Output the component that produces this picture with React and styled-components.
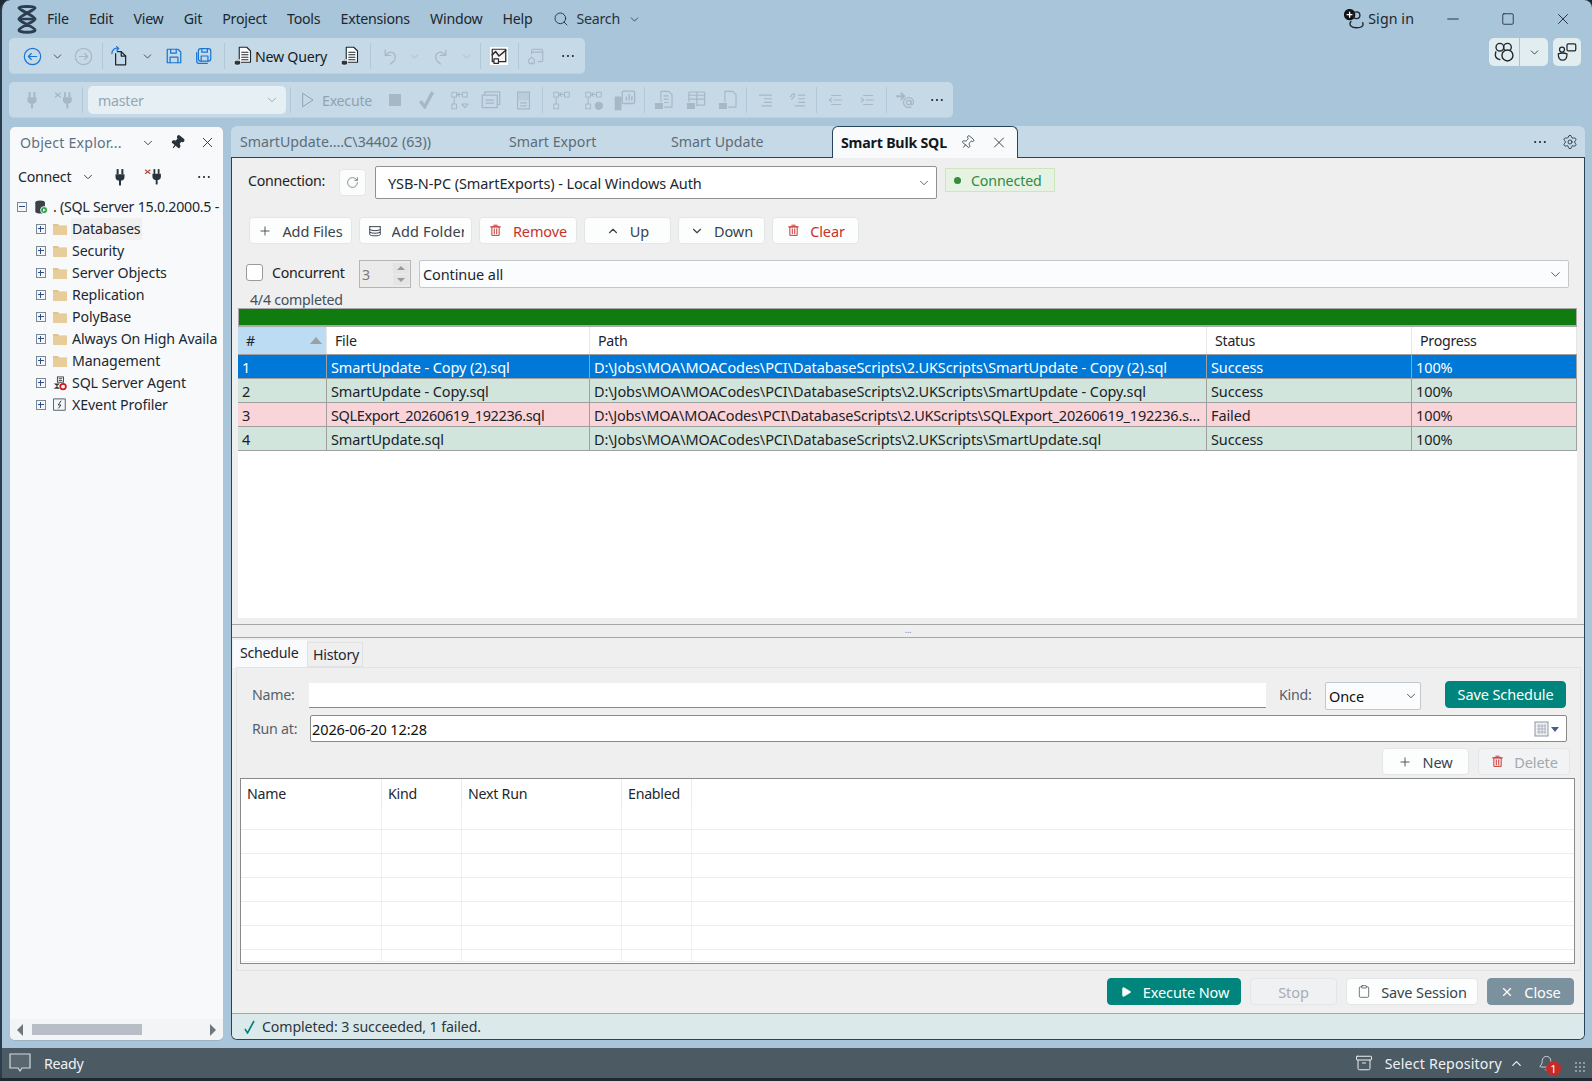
import React from 'react';
import styled, { createGlobalStyle } from 'styled-components';
import { ChevronDown, ChevronUp, Search, X, Pin, Settings, Plus, Square, Minus, Play, Clipboard, Bell, Archive, RotateCw } from 'lucide-react';

const Global = createGlobalStyle`
  html, body { margin: 0; padding: 0; background: #1d2a33; overflow: hidden; }
  * { box-sizing: border-box; }
  #root { width: 1592px; height: 1081px; }
`;

const Frame = styled.div`
  width: 1592px; height: 1078px; background: #a8c5da; border-left: 2px solid #2a3d4e;
  border-top-left-radius: 10px; border-top-right-radius: 8px; overflow: hidden;
  display: flex; flex-direction: column;
  font-family: "Noto Sans", "Open Sans", sans-serif; font-size: 14.2px; letter-spacing: -0.25px; color: #1c2730;
`;
const Wide = `font-size: 14.5px; letter-spacing: -0.1px;`;

const MenuBar = styled.div`height: 38px; display: flex; align-items: center; padding: 0 2px 0 11px; flex-shrink: 0;`;
const Logo = styled.div`width: 27px; height: 30px; display: flex; align-items: center; justify-content: center; margin-right: 7px;`;
const MenuItems = styled.div`display: flex; gap: 20.2px; align-items: center;`;
const MenuItem = styled.span`line-height: 20px; white-space: nowrap;`;
const SearchBox = styled.div`display: flex; align-items: center; gap: 8px; margin-left: 20px; color: #28343d;`;
const Grow = styled.div`flex: 1;`;
const SignIn = styled.div`display: flex; align-items: center; gap: 4px; margin-right: 11px; letter-spacing: 0.1px;`;
const WinBtn = styled.div`width: 55px; display: flex; justify-content: center; align-items: center; color: #1c2730;`;

const ToolRow = styled.div`display: flex; height: 36px; margin: 0 0 8px 7px; align-items: stretch; flex-shrink: 0;`;
const Toolbar = styled.div`
  width: ${p => p.$w}px; background: #c6d9e7; border-radius: 5px; display: flex; align-items: center;
  padding-left: ${p => p.$pad}px; box-shadow: inset 0 -1px 0 #bcd1e0;
`;
const Slot = styled.div`
  width: ${p => p.$w || 32}px; flex-shrink: 0; display: flex; align-items: center; justify-content: center;
  color: ${p => p.$c || '#a6b8c5'};
`;
const Sep = styled.div`
  width: ${p => p.$w || 6}px; flex-shrink: 0; height: 26px; display: flex; justify-content: center;
  &::after { content: ''; width: 1px; background: #b3c8d7; }
`;
const NewQueryBtn = styled.div`width: 105px; flex-shrink: 0; padding-left: 5px; display: flex; align-items: center; gap: 2px; color: #151d24; white-space: nowrap;`;
const DbCombo = styled.div`
  width: 198px; height: 28px; margin-left: 4px; flex-shrink: 0; background: #e6eff3; border-radius: 5px; display: flex; align-items: center;
  justify-content: space-between; padding: 0 7px 0 10px; color: #94a6b2;
`;
const ExecBtn = styled.div`width: 85px; flex-shrink: 0; padding-left: 6px; display: flex; align-items: center; gap: 6px; color: #8fa3b1;`;
const Corner = styled.div`margin-left: auto; margin-right: 11px; display: flex; gap: 5px;`;
const CornerBtn = styled.div`
  height: 28px; width: ${p => p.$w}px; background: #e2edf0; border-radius: 5px; display: flex; align-items: center; overflow: hidden;
`;
const CornerCell = styled.div`
  width: ${p => p.$w}px; height: 100%; display: flex; align-items: center; justify-content: center;
  & + & { border-left: 1px solid #aebfca; }
`;

const Main = styled.div`flex: 1; display: flex; padding: 0 7px 0 8px; min-height: 0; height: 914px;`;

const Explorer = styled.div`
  width: 213px; margin-top: 1px; flex-shrink: 0; background: #f8f9fb; border-radius: 5px; display: flex; flex-direction: column;
  box-shadow: 0 1px 0 #9db2c1;
`;
const ExTitle = styled.div`height: 31px; display: flex; align-items: center; padding-left: 10px; color: #5d7183; white-space: nowrap; letter-spacing: 0.2px;`;
const ExIcon = styled.div`width: ${p => p.$w}px; margin-left: ${p => p.$ml || 0}px; display: flex; justify-content: center; align-items: center; color: #28333c; flex-shrink: 0;`;
const TiltPin = styled(Pin)`transform: rotate(40deg);`;
const ConnectRow = styled.div`height: 34px; padding: 3px 0 0 8px; display: flex; align-items: center;`;
const Tree = styled.div`flex: 1; padding-top: 4px; overflow: hidden; letter-spacing: -0.13px;`;
const TreeRow = styled.div`height: 22px; display: flex; align-items: center; padding-left: ${p => p.$in}px; white-space: nowrap;`;
const Expander = styled.div`
  width: 10px; height: 10px; border: 1px solid #7c8794; background: #f4f5f7; flex-shrink: 0; position: relative; margin-right: 7px;
  &::before { content: ''; position: absolute; left: 1px; right: 1px; top: 3px; height: 1px; background: #2d4f8a; }
  &::after { content: ''; position: absolute; top: 1px; bottom: 1px; left: 3px; width: 1px; background: #2d4f8a; display: ${p => p.$open ? 'none' : 'block'}; }
`;
const TreeIcon = styled.div`width: 14px; height: 14px; display: flex; align-items: center; flex-shrink: 0; margin-right: 4px;`;
const TreeLabel = styled.span`
  padding: 0 1px; line-height: 22px; background: ${p => p.$sel ? '#f0f0f0' : 'transparent'}; letter-spacing: ${p => p.$tight ? '-0.25px' : 'inherit'};
`;
const ExScroll = styled.div`height: 21px; background: #f3f4f5; border-radius: 0 0 5px 5px; display: flex; align-items: center; padding: 0 7px 0 7px;`;
const ExThumb = styled.div`width: 110px; height: 11px; background: #b9bdc5; margin-left: 9px;`;
const Arrow = styled.div`
  width: 0; height: 0; border-top: 6px solid transparent; border-bottom: 6px solid transparent;
  ${p => p.$r ? 'border-left: 6px solid #6d7780; margin-left: auto;' : 'border-right: 6px solid #6d7780;'}
`;

const Doc = styled.div`width: 1354px; margin-left: 8px; display: flex; flex-direction: column; flex-shrink: 0;`;
const TabStrip = styled.div`
  height: 32px; background: #c6d9e7; border-radius: 6px 6px 0 0; border-bottom: 1px solid #26445c; display: flex; flex-shrink: 0; align-items: stretch; color: #5c6d79; letter-spacing: 0;
`;
const DocTab = styled.div`width: ${p => p.$w}px; padding-left: ${p => p.$pl}px; display: flex; align-items: center; white-space: nowrap; flex-shrink: 0;`;
const ActiveTab = styled.div`
  width: 186px; height: 32px; background: #f9fafb; border: 1px solid #26445c; border-bottom: none; border-radius: 6px 6px 0 0; color: #101820;
  font-weight: 700; display: flex; align-items: center; padding-left: 8px; white-space: nowrap; flex-shrink: 0; letter-spacing: -0.2px;
`;
const TabTools = styled.div`margin-left: auto; display: flex; align-items: center; gap: 15px; padding-right: 7px; color: #28333c;`;

const Content = styled.div`
  flex: 1; background: #efefef; border: 1px solid #26445c; border-top: none; border-radius: 0 0 6px 6px; display: flex; flex-direction: column; min-height: 0; overflow: hidden;
`;
const ConnRow = styled.div`display: flex; align-items: flex-start; padding: 8px 0 0 16px; height: 41px; flex-shrink: 0;`;
const ConnLabel = styled.div`width: 91px; line-height: 30px; color: #222;`;
const RefreshBtn = styled.div`width: 27px; height: 27px; margin-top: 3px; background: #fbfcfc; border: 1px solid #e4e6e7; border-radius: 4px; display: flex; align-items: center; justify-content: center; color: #555;`;
const ConnCombo = styled.div`
  ${Wide}
  width: 562px; height: 33px; margin-left: 9px; padding: 1px 5px 0 12px; background: #fff; border: 1px solid #8e9295; border-radius: 2px; display: flex; align-items: center;
  justify-content: space-between;
`;
const Badge = styled.div`
  width: 110px; height: 24px; margin: 2px 0 0 8px; background: #e6f2e2; border: 1px solid #cde6c0; display: flex; align-items: center; padding-left: 8px; color: #2e8b47; gap: 10px; letter-spacing: -0.12px;
`;
const Dot = styled.div`width: 7px; height: 7px; border-radius: 50%; background: #2f8f3e;`;
const BtnRow = styled.div`display: flex; gap: 7px; padding: 18px 0 0 17px; height: 45px; flex-shrink: 0;`;
const Btn = styled.div`
  ${Wide}
  width: ${p => p.$w}px; height: 27px; flex-shrink: 0; border-radius: 4px; display: flex; align-items: center; justify-content: center; gap: ${p => p.$gap || 10}px;
  background: ${p => p.$bg || '#fcfdfd'}; border: 1px solid ${p => p.$line || '#e3e5e6'}; color: ${p => p.$c || '#3a444c'}; white-space: nowrap; overflow: hidden;
`;
const ClipText = styled.span`display: block; max-width: ${p => p.$w}px; overflow: hidden; letter-spacing: 0.15px;`;
const BtnIcon = styled.span`display: flex; width: 14px; justify-content: center; color: ${p => p.$c || 'inherit'}; flex-shrink: 0;`;
const ConcRow = styled.div`display: flex; align-items: center; padding: 16px 0 0 14px; height: 44px; flex-shrink: 0;`;
const Check = styled.div`width: 17px; height: 17px; background: #fff; border: 1px solid #9a9a9a; border-radius: 3px; margin-right: 9px; margin-bottom: 4px;`;
const ConcLabel = styled.div`width: 87px; color: #222; margin-bottom: 4px;`;
const Spin = styled.div`width: 52px; height: 28px; background: #ebebeb; border: 1px solid #b5b5b5; display: flex; align-items: center; padding-left: 2px; color: #7a7a7a; justify-content: space-between;`;
const SpinBtns = styled.div`width: 18px; height: 100%; padding: 2px 1px; display: flex; flex-direction: column; gap: 1px;`;
const SpinB = styled.div`
  flex: 1; background: #e2e4e6; display: flex; align-items: center; justify-content: center;
  &::after { content: ''; border-left: 4px solid transparent; border-right: 4px solid transparent; ${p => p.$up ? 'border-bottom: 4px solid #9a9a9a;' : 'border-top: 4px solid #9a9a9a;'} }
`;
const PolicyCombo = styled.div`
  ${Wide}
  width: 1150px; height: 28px; margin-left: 8px; background: #fbfcfd; border: 1px solid #c4c8cb; border-radius: 2px; display: flex; align-items: center;
  justify-content: space-between; padding: 0 5px 0 3px;
`;
const CountLabel = styled.div`height: 20px; padding-left: 18px; line-height: 24px; color: #45505a; flex-shrink: 0;`;
const Progress = styled.div`height: 19px; margin: 0 7px 0 6px; background: #107c10; border: 1px solid #a9a9a9; border-bottom-width: 2px; flex-shrink: 0;`;
const Grid = styled.div`height: 291px; margin: 0 7px 0 6px; background: #fff; flex-shrink: 0;`;
const cols = '89px 263px 617px 205px 1fr';
const HeadRow = styled.div`display: grid; grid-template-columns: ${cols}; height: 28px; border-bottom: 1px solid #a0a0a0;`;
const HeadCell = styled.div`
  padding-left: 8px; display: flex; align-items: center; justify-content: space-between; border-right: 1px solid #e6e6e6; color: #1d242b;
  background: ${p => p.$sort ? '#bbdcf2' : 'transparent'};
`;
const SortTri = styled.div`width: 0; height: 0; border-left: 6px solid transparent; border-right: 6px solid transparent; border-bottom: 7px solid #9aa0a5; margin-right: 4px;`;
const DataRow = styled.div`
  ${Wide}
  display: grid; grid-template-columns: ${cols}; height: 24px; background: ${p => p.$bg}; color: ${p => p.$c || '#1c2228'}; border-bottom: 1px solid #a0a0a0;
`;
const DataCell = styled.div`
  padding-left: 4px; line-height: 25px; white-space: nowrap; overflow: hidden; border-right: 1px solid #a0a0a0;
  letter-spacing: ${p => p.$ls || 'inherit'};
`;
const Splitter = styled.div`
  height: 14px; margin-top: 6px; border-top: 1px solid #a6a6a6; border-bottom: 1px solid #a6a6a6; display: flex; justify-content: center; color: #8a8a8a;
  font-size: 9px; line-height: 10px; flex-shrink: 0;
`;
const InnerTabs = styled.div`height: 29px; display: flex; align-items: flex-end; padding-left: 1px; flex-shrink: 0;`;
const InTab = styled.div`
  width: ${p => p.$w}px; height: ${p => p.$on ? 28 : 25}px; padding-left: ${p => p.$on ? 7 : 5}px; background: ${p => p.$on ? '#f8fafb' : '#efefef'};
  border: ${p => p.$on ? 'none' : '1px solid #e2e2e2'}; line-height: ${p => p.$on ? 26 : 24}px; margin-bottom: ${p => p.$on ? -1 : 0}px; flex-shrink: 0;
`;
const Panel = styled.div`
  height: 304px; margin: 0 3px 0 4px; border: 1px solid #e3e3e3; padding: 12px 5px 0 15px; display: flex; flex-direction: column; flex-shrink: 0;
`;
const FormRow = styled.div`display: flex; align-items: center; height: ${p => p.$h}px; margin-top: ${p => p.$mt || 0}px; flex-shrink: 0;`;
const FormLabel = styled.div`width: 57px; color: #55616b; flex-shrink: 0;`;
const NameInput = styled.div`width: 957px; height: 25px; margin-top: 2px; background: #fff; border-bottom: 1px solid #8a8a8a;`;
const KindLabel = styled.div`width: 46px; margin-left: 13px; color: #55616b;`;
const KindCombo = styled.div`
  ${Wide}
  width: 96px; height: 28px; margin-top: 4px; background: #fbfcfd; border: 1px solid #c4c8cb; border-radius: 2px; display: flex; align-items: center; justify-content: space-between; padding: 0 2px 0 3px; margin-right: 24px; color: #111;
`;
const RunInput = styled.div`
  ${Wide}
  width: 1257px; height: 27px; margin-left: 1px; background: #fff; border: 1px solid #8a8a8a; border-radius: 2px; display: flex; align-items: center; justify-content: space-between; padding: 0 6px 0 1px; color: #111;
`;
const RightRow = styled.div`display: flex; justify-content: flex-end; gap: 9px; margin-top: 6px; margin-right: 5px; flex-shrink: 0;`;
const SchedTable = styled.div`height: 186px; width: 1335px; margin: 3px 0 0 -12px; background: #fff; border: 1px solid #8a8a8a; flex-shrink: 0; position: relative; overflow: hidden;`;
const scols = '141px 80px 160px 70px 1fr';
const SchedHead = styled.div`display: grid; grid-template-columns: ${scols}; height: 28px;`;
const SchedHeadCell = styled.div`padding-left: 6px; line-height: 29px; border-right: 1px solid #ececec; &:last-child { border: none; }`;
const SchedRow = styled.div`display: grid; grid-template-columns: ${scols}; height: ${p => p.$h || 24}px; border-bottom: 1px solid #ededed;`;
const SchedCell = styled.div`border-right: 1px solid #f0f0f0; &:last-child { border: none; }`;
const Actions = styled.div`display: flex; justify-content: flex-end; gap: 9px; padding: 7px 10px 0 0; height: 42px; flex-shrink: 0;`;
const Result = styled.div`
  flex: 1; background: #dce9ea; border-top: 1px solid #a6a6a6; display: flex; align-items: center; padding-left: 12px; gap: 6px; color: #2b3640; letter-spacing: -0.12px;
`;
const StatusBar = styled.div`
  height: 30px; margin-top: 8px; background: #4c5a64; display: flex; align-items: center; padding: 0 6px 0 7px; color: #eef2f4; flex-shrink: 0;
`;
const ReadyText = styled.span`margin-left: 13px;`;
const RepoText = styled.span`margin: 0 7px 0 12px; letter-spacing: 0.17px;`;
const BellWrap = styled.div`position: relative; display: flex; margin-left: 14px; width: 20px; color: #dfe5e8;`;
const NotifBadge = styled.div`
  position: absolute; left: 8px; top: 6px; width: 15px; height: 15px; border-radius: 50%; background: #c42b2b; color: #fff; font-size: 11px; line-height: 15px; text-align: center; letter-spacing: 0;
`;
const Grip = styled.div`margin-left: 16px; width: 12px; height: 12px; margin-top: 8px; background-image: radial-gradient(#8f9aa2 1px, transparent 1px); background-size: 4px 4px;`;

const G = ({ s = 16, children, fill = 'none', sw = 1.1 }) => (
  <svg viewBox="0 0 16 16" width={s} height={s} fill={fill} stroke="currentColor" strokeWidth={sw} strokeLinecap="round" strokeLinejoin="round">{children}</svg>
);
const Chev = ({ s = 13, sw = 1.5 }) => <ChevronDown size={s} strokeWidth={sw} />;

const LogoIcon = () => (
  <svg viewBox="0 0 24 30" width="26" height="30" fill="none" stroke="#2c3e4f" strokeWidth="3" strokeLinecap="round">
    <path d="M4 4c0-2 16-2 16 0s-16 8-16 11 16 8 16 11-16 3-16 0 16-8 16-11S4 6 4 4z" />
    <path d="M4 15h16" strokeWidth="2.4" />
  </svg>
);
const CircleArrow = ({ back }) => (
  <G s={19} sw={1}><circle cx="8" cy="8" r="6.9" />{back ? <path d="M11.5 8h-7M7 5.5 4.5 8 7 10.5" /> : <path d="M4.5 8h7M9 5.5 11.5 8 9 10.5" />}</G>
);
const NewProject = () => (
  <G s={20} sw={1}><path d="M6 4.5h3l3.5 3.5v7H4.5V6" /><path d="M9 4.5V8h3.5" /><path d="M1.5 6c.2-3 2.4-4.7 5-4.2M5.3 0.5 7 1.9 5.5 3.6" stroke="#1976d2" /></G>
);
const Floppy = () => (
  <G s={18} sw={1.1}><path d="M2 2h9.5L14 4.5V14H2z" /><path d="M5 2v3.5h5V2M4.5 14V9h7v5" /></G>
);
const FloppyAll = () => (
  <G s={18} sw={1.1}><rect x="3" y="1.5" width="11" height="11" rx="2" /><path d="M6 1.5v3h5v-3M5.5 12.5V8h6v4.5" /><path d="M1.5 5v7.5c0 1.2 1 2 2 2H11" /></G>
);
const QueryDoc = () => (
  <G s={20} sw={0.9}>
    <path d="M5 1h6l3 3v9H5z" fill="#fff" stroke="#1c2730" /><path d="M7 5h5M7 7h5M7 9h5M7 11h5" stroke="#1c2730" />
    <ellipse cx="3.5" cy="12" rx="2.6" ry="1.4" fill="#28333c" stroke="#fff" strokeWidth=".6" /><path d="M1 12v2.2c0 1.5 5 1.5 5 0V12z" fill="#28333c" stroke="#fff" strokeWidth=".6" />
  </G>
);
const Undo = () => <G s={17} sw={1.2}><path d="M3 2v5h5M3 7c2-2.5 4-3.5 6-3 4 1 4.5 6 2 8.500L8 15" /></G>;
const Redo = () => <G s={17} sw={1.2}><path d="M13 2v5H8M13 7c-2-2.500-4-3.500-6-3-4 1-4.500 6-2 8.500L8 15" /></G>;
const Activity = () => (
  <G s={18} sw={1.1}>
    <rect x="0.500" y="0.500" width="15" height="15" fill="#fff" stroke="#fff" />
    <rect x="2" y="2" width="12" height="11" fill="#f4f4f4" stroke="#2b2b2b" />
    <path d="M2 7l3-3 3 4 6-5" stroke="#2b2b2b" strokeWidth="1.300" /><rect x="3.500" y="10.500" width="4" height="4" fill="#fff" stroke="#2b2b2b" />
  </G>
);
const Home = () => <G s={18} sw={1}><path d="M4 6V3.500c0-1 .7-1.500 1.500-1.500h7c1 0 1.500.7 1.500 1.500v8c0 1-.6 1.500-1.500 1.500H10M4 4.500h10" /><path d="M1.500 14v-2.500L4 9l2.500 2.500V14a1 1 0 0 1-2 0h-.5a1 1 0 0 1-2 0z" /></G>;
const Plug = ({ s = 18 }) => (
  <svg viewBox="0 0 16 16" width={s} height={s} fill="currentColor"><rect x="5" y="1" width="1.800" height="4.500" /><rect x="9.200" y="1" width="1.800" height="4.500" /><path d="M4 5.500h8V8c0 2-1.200 3-2.500 3.200h-3C5.200 11 4 10 4 8z" /><rect x="7.100" y="10.500" width="1.800" height="5" /></svg>
);
const PlugX = ({ s = 18, xc = '#b5533a' }) => (
  <svg viewBox="0 0 18 16" width={s + 2} height={s} fill="currentColor"><rect x="9" y="1" width="1.700" height="4.500" /><rect x="13" y="1" width="1.700" height="4.500" /><path d="M8 5.500h8V8c0 2-1.200 3-2.500 3.200h-3C9.200 11 8 10 8 8z" /><rect x="11.100" y="10.500" width="1.800" height="5" /><path d="M1 1.500l5 4M6 1.500l-5 4" stroke={xc} strokeWidth="1.200" fill="none" /></svg>
);
const Check2 = () => <svg viewBox="0 0 16 16" width="18" height="18" fill="none" stroke="currentColor" strokeWidth="3"><path d="M2 9l4 5 7-13" /></svg>;
const Flow = ({ v }) => (
  <G s={19} sw={0.9}>
    <rect x="1.500" y="1" width="4" height="4" strokeDasharray="1 .6" /><rect x="10.500" y="1" width="4" height="4" strokeDasharray="1 .6" /><rect x="1.500" y="11" width="4" height="4" strokeDasharray="1 .6" />
    <path d="M10 3H6M8 1.500 6 3l2 1.500M3.500 10.500V5.500" />
    {v === 'd' && <path d="M10 11l2.500 3 2.500-3z" />}
    {v === 'c' && <circle cx="12.500" cy="12.500" r="3" fill="currentColor" />}
  </G>
);
const Stack = () => <G s={20} sw={1}><rect x="3" y="1.500" width="12" height="10" strokeDasharray="1.200 .5" /><rect x="1" y="4" width="12" height="10" fill="#c6d9e7" /><path d="M4 8h6M4 10.500h6" /></G>;
const Panes = () => <G s={19} sw={1}><rect x="3" y="1" width="10" height="14" /><rect x="3.500" y="1.500" width="9" height="6" fill="currentColor" opacity=".35" /><path d="M5.500 10h5M5.500 12.500h5" /></G>;
const Bars = () => <G s={22} sw={1}><rect x="6" y="1.500" width="9" height="9" rx="1" /><path d="M9 8V6M11 8V4M13 8V5.500" /><rect x="1" y="6" width="4" height="9" fill="currentColor" /></G>;
const BinDoc = ({ k }) => (
  <G s={21} sw={.9}>
    {k === 't' ? <><rect x="3" y="1.500" width="12" height="10" /><path d="M3 4h12M3 7h12M9 1.500v10" /></> : <path d="M6 1h6l2.500 2.500V13H6z" strokeDasharray="1.500 .4" />}
    {k === 'l' && <path d="M8.500 4.500h3M8.500 7h3M8.500 9.500h3" />}
    <rect x="1" y="9.500" width="7" height="5.500" fill="currentColor" stroke="#c6d9e7" />
  </G>
);
const IndList = ({ undo }) => <G s={19} sw={1}>{undo ? <path d="M2 5c2-4 5-3 3 0L3 7M9 3.500h5M9 6.500h5M9 9.500h5M6 12.500h8" /> : <path d="M3 3.500h10M7 6.500h6M7 9.500h6M5 12.500h8" />}</G>;
const Outdent = ({ flip }) => <G s={18} sw={1}>{flip ? <path d="M5 4h8M3 6.500l2 1.500-2 1.500M7 8h7M5 12h8" /> : <path d="M5 4h8M5 6.500 3 8l2 1.500M7 8h7M5 12h8" />}</G>;
const AtArrow = () => <G s={20} sw={1}><path d="M1.500 5h6M5 2.500 7.500 5 5 7.500" strokeWidth="1.500" /><circle cx="11" cy="10" r="1.800" /><path d="M12.800 8.500v2.500c0 1.300 2 .7 2-1 0-2.500-1.800-4-4-4s-4 1.800-4 4 1.800 4 4 4c.8 0 1.500-.2 2-.5" /></G>;
const Dots = ({ c = '#1c2730' }) => <svg viewBox="0 0 16 4" width="14" height="4" fill={c}><circle cx="2.500" cy="2" r="1.200" /><circle cx="8" cy="2" r="1.200" /><circle cx="13.500" cy="2" r="1.200" /></svg>;
const Person = () => <G s={20} sw={1.1}><circle cx="4.500" cy="4.500" r="4" fill="#111" stroke="#111" /><path d="M4.500 2.500v4M2.500 4.500h4" stroke="#fff" /><circle cx="10" cy="5" r="2.700" /><path d="M5.500 10c-2 3 .5 5 4.500 5s6-1.500 5-4" /></G>;
const Team = () => <G s={22} sw={1}><circle cx="5" cy="4.500" r="2.800" /><circle cx="10.500" cy="4.500" r="2.800" /><path d="M2 8c-.8 3 0 5 3 5.500" /><circle cx="10.500" cy="10.500" r="4" fill="#e2edf0" /></G>;
const Chat = () => <G s={20} sw={1}><rect x="8" y="1.500" width="7" height="5.500" rx="1" /><circle cx="4" cy="6" r="2" /><path d="M1 9.500c2-.8 5-.8 7 0 0 3-.5 5-3.500 5S1 12.500 1 9.500z" /></G>;
const Folder = () => <svg viewBox="0 0 14 14" width="14" height="14" fill="#e0c48a"><path d="M0 2h5l1 1.500h8V13H0z" /><rect x="0" y="4" width="14" height="9" fill="#e6cd9a" /></svg>;
const Server = () => (
  <svg viewBox="0 0 16 16" width="16" height="16"><ellipse cx="7" cy="3" rx="5.500" ry="2.500" fill="#3c4247" /><path d="M1.500 3v10c0 3.300 11 3.300 11 0V3z" fill="#3c4247" /><circle cx="11.500" cy="11.500" r="4" fill="#2e9e4f" stroke="#fff" /><path d="M10.300 9.700v3.600l3-1.800z" fill="#fff" /></svg>
);
const Agent = () => (
  <svg viewBox="0 0 16 16" width="15" height="15"><rect x="5" y="0.500" width="7" height="6" fill="#fff" stroke="#333" /><path d="M6.500 2.500h4M6.500 4.500h4" stroke="#333" /><path d="M1 8h7l-7 6h7z" fill="#333" /><circle cx="11.500" cy="11.500" r="3.200" fill="#fff" stroke="#d01818" strokeWidth="2" /></svg>
);
const XEvent = () => <G s={14} sw={1}><rect x="1" y="1" width="13" height="13" fill="#f4f5f7" stroke="#454d55" /><path d="M9 3.500 6 8h3l-2.500 3.500" /></G>;
const Trash = ({ s = 15 }) => <G s={s} sw={1.2}><path d="M3.500 4v10h9V4zM2 3.500h12M6 1.500h4M6.500 6v6M9.500 6v6" /></G>;
const FolderAdd = () => <G s={14} sw={1.1}><path d="M2 3h12M2 3v9c0 2 12 2 12 0V3M2 6.500c3 1.500 9 1.500 12 0M2 9.500c3 1.500 9 1.500 12 0" /></G>;
const Tick = () => <svg viewBox="0 0 12 14" width="12" height="14" fill="none" stroke="#00857c" strokeWidth="1.600"><path d="M1 9l2.500 4L10 1" /></svg>;
const Calendar = () => (
  <svg viewBox="0 0 26 16" width="26" height="16"><rect x="1" y="1" width="13" height="14" fill="#eef0f4" stroke="#8d94a2" /><path d="M3 5h9M3 8h9M3 11h9M5 3v10M8 3v10M11 3v10" stroke="#aeb3be" /><path d="M17 6h8l-4 5z" fill="#4f5b8c" /></svg>
);

const tree = ['Security', 'Server Objects', 'Replication', 'PolyBase', 'Always On High Availa', 'Management'];
const rows = [
  ['1', 'SmartUpdate - Copy (2).sql', 'D:\\Jobs\\MOA\\MOACodes\\PCI\\DatabaseScripts\\2.UKScripts\\SmartUpdate - Copy (2).sql', 'Success', '#0078d7', '#fff'],
  ['2', 'SmartUpdate - Copy.sql', 'D:\\Jobs\\MOA\\MOACodes\\PCI\\DatabaseScripts\\2.UKScripts\\SmartUpdate - Copy.sql', 'Success', '#d1e5dc'],
  ['3', 'SQLExport_20260619_192236.sql', 'D:\\Jobs\\MOA\\MOACodes\\PCI\\DatabaseScripts\\2.UKScripts\\SQLExport_20260619_192236.s...', 'Failed', '#f9d5da', undefined, '-0.37px', '-0.2px'],
  ['4', 'SmartUpdate.sql', 'D:\\Jobs\\MOA\\MOACodes\\PCI\\DatabaseScripts\\2.UKScripts\\SmartUpdate.sql', 'Success', '#d1e5dc'],
];
const red = '#c8322d';

export default function App() {
  return (
    <>
      <Global />
      <Frame>
        <MenuBar>
          <Logo><LogoIcon /></Logo>
          <MenuItems>
            {['File', 'Edit', 'View', 'Git', 'Project', 'Tools', 'Extensions', 'Window', 'Help'].map(m => <MenuItem key={m}>{m}</MenuItem>)}
          </MenuItems>
          <SearchBox><Search size={16} strokeWidth={1.4} /><MenuItem>Search</MenuItem><Chev /></SearchBox>
          <Grow />
          <SignIn><Person /><MenuItem>Sign in</MenuItem></SignIn>
          <WinBtn><Minus size={18} strokeWidth={1.2} /></WinBtn>
          <WinBtn><Square size={14} strokeWidth={1.4} /></WinBtn>
          <WinBtn><X size={18} strokeWidth={1.2} /></WinBtn>
        </MenuBar>

        <ToolRow>
          <Toolbar $w={576} $pad={9}>
            <Slot $w={28} $c="#1976d2"><CircleArrow back /></Slot>
            <Slot $w={22} $c="#28333c"><Chev /></Slot>
            <Slot $w={30}><CircleArrow /></Slot>
            <Sep $w={8} />
            <Slot $w={28} $c="#1c2730"><NewProject /></Slot>
            <Slot $w={26} $c="#28333c"><Chev /></Slot>
            <Slot $w={28} $c="#1976d2"><Floppy /></Slot>
            <Slot $w={32} $c="#1976d2"><FloppyAll /></Slot>
            <Sep $w={8} />
            <NewQueryBtn><QueryDoc />New Query</NewQueryBtn>
            <Slot $w={33} $c="#1c2730"><QueryDoc /></Slot>
            <Sep $w={8} />
            <Slot $w={32}><Undo /></Slot>
            <Slot $w={16}><Chev /></Slot>
            <Slot $w={36}><Redo /></Slot>
            <Slot $w={16}><Chev /></Slot>
            <Sep $w={12} />
            <Slot $w={26} $c="#2b2b2b"><Activity /></Slot>
            <Sep $w={12} />
            <Slot $w={24}><Home /></Slot>
            <Slot $w={40} $c="#1c2730"><Dots /></Slot>
          </Toolbar>
          <Corner>
            <CornerBtn $w={59}>
              <CornerCell $w={30}><Team /></CornerCell>
              <CornerCell $w={29}><Chev /></CornerCell>
            </CornerBtn>
            <CornerBtn $w={28}>
              <CornerCell $w={28}><Chat /></CornerCell>
            </CornerBtn>
          </Corner>
        </ToolRow>

        <ToolRow>
          <Toolbar $w={944} $pad={7}>
            <Slot><Plug /></Slot>
            <Slot><PlugX s={18} xc="#a6b8c5" /></Slot>
            <Sep $w={4} />
            <DbCombo>master<Chev s={14} /></DbCombo>
            <Sep $w={8} />
            <ExecBtn><G s={16} sw={1}><path d="M3 1.500 13 8 3 14.500z" /></G>Execute</ExecBtn>
            <Slot><svg width="12" height="12"><rect width="12" height="12" fill="#a6b8c5" /></svg></Slot>
            <Slot><Check2 /></Slot>
            <Slot><Flow v="d" /></Slot>
            <Slot><Stack /></Slot>
            <Slot><Panes /></Slot>
            <Sep />
            <Slot><Flow /></Slot>
            <Slot><Flow v="c" /></Slot>
            <Slot><Bars /></Slot>
            <Sep />
            <Slot><BinDoc k="l" /></Slot>
            <Slot><BinDoc k="t" /></Slot>
            <Slot><BinDoc /></Slot>
            <Sep />
            <Slot><IndList /></Slot>
            <Slot><IndList undo /></Slot>
            <Sep />
            <Slot><Outdent /></Slot>
            <Slot><Outdent flip /></Slot>
            <Sep />
            <Slot><AtArrow /></Slot>
            <Slot $c="#1c2730"><Dots /></Slot>
          </Toolbar>
        </ToolRow>

        <Main>
          <Explorer>
            <ExTitle>
              Object Explor...
              <ExIcon $w={16} $ml={18}><Chev s={14} /></ExIcon>
              <ExIcon $w={18} $ml={13}><TiltPin size={15} fill="#28333c" /></ExIcon>
              <ExIcon $w={18} $ml={12}><X size={17} strokeWidth={1.3} /></ExIcon>
            </ExTitle>
            <ConnectRow>
              Connect
              <ExIcon $w={16} $ml={9}><Chev s={14} /></ExIcon>
              <ExIcon $w={18} $ml={15}><Plug /></ExIcon>
              <ExIcon $w={20} $ml={14}><PlugX s={17} /></ExIcon>
              <ExIcon $w={16} $ml={33}><Dots /></ExIcon>
            </ConnectRow>
            <Tree>
              <TreeRow $in={7}>
                <Expander $open />
                <TreeIcon><Server /></TreeIcon>
                <TreeLabel $tight>. (SQL Server 15.0.2000.5 -</TreeLabel>
              </TreeRow>
              <TreeRow $in={26}><Expander /><TreeIcon><Folder /></TreeIcon><TreeLabel $sel>Databases</TreeLabel></TreeRow>
              {tree.map(t => <TreeRow key={t} $in={26}><Expander /><TreeIcon><Folder /></TreeIcon><TreeLabel>{t}</TreeLabel></TreeRow>)}
              <TreeRow $in={26}><Expander /><TreeIcon><Agent /></TreeIcon><TreeLabel>SQL Server Agent</TreeLabel></TreeRow>
              <TreeRow $in={26}><Expander /><TreeIcon><XEvent /></TreeIcon><TreeLabel>XEvent Profiler</TreeLabel></TreeRow>
            </Tree>
            <ExScroll><Arrow /><ExThumb /><Arrow $r /></ExScroll>
          </Explorer>

          <Doc>
            <TabStrip>
              <DocTab $w={270} $pl={9}>SmartUpdate....C\34402 (63))</DocTab>
              <DocTab $w={170} $pl={8}>Smart Export</DocTab>
              <DocTab $w={161} $pl={0}>Smart Update</DocTab>
              <ActiveTab>
                Smart Bulk SQL
                <ExIcon $w={16} $ml={13}><TiltPin size={15} strokeWidth={1.2} /></ExIcon>
                <ExIcon $w={18} $ml={14}><X size={19} strokeWidth={1.2} /></ExIcon>
              </ActiveTab>
              <TabTools><Dots /><Settings size={16} strokeWidth={1.3} /></TabTools>
            </TabStrip>
            <Content>
              <ConnRow>
                <ConnLabel>Connection:</ConnLabel>
                <RefreshBtn><RotateCw size={13} strokeWidth={1.2} /></RefreshBtn>
                <ConnCombo>YSB-N-PC (SmartExports) - Local Windows Auth<Chev s={14} sw={1.2} /></ConnCombo>
                <Badge><Dot />Connected</Badge>
              </ConnRow>
              <BtnRow>
                <Btn $w={103}><BtnIcon><Plus size={14} strokeWidth={1.5} /></BtnIcon>Add Files</Btn>
                <Btn $w={113}><BtnIcon><FolderAdd /></BtnIcon><ClipText $w={72}>Add Folder</ClipText></Btn>
                <Btn $w={98} $c={red}><BtnIcon $c={red}><Trash s={13} /></BtnIcon>Remove</Btn>
                <Btn $w={87}><BtnIcon><ChevronUp size={14} strokeWidth={2} /></BtnIcon>Up</Btn>
                <Btn $w={87}><BtnIcon><ChevronDown size={14} strokeWidth={2} /></BtnIcon>Down</Btn>
                <Btn $w={87} $c={red}><BtnIcon $c={red}><Trash s={13} /></BtnIcon>Clear</Btn>
              </BtnRow>
              <ConcRow>
                <Check />
                <ConcLabel>Concurrent</ConcLabel>
                <Spin>3<SpinBtns><SpinB $up /><SpinB /></SpinBtns></Spin>
                <PolicyCombo>Continue all<Chev s={15} sw={1.2} /></PolicyCombo>
              </ConcRow>
              <CountLabel>4/4 completed</CountLabel>
              <Progress />
              <Grid>
                <HeadRow>
                  <HeadCell $sort>#<SortTri /></HeadCell>
                  <HeadCell>File</HeadCell>
                  <HeadCell>Path</HeadCell>
                  <HeadCell>Status</HeadCell>
                  <HeadCell>Progress</HeadCell>
                </HeadRow>
                {rows.map(r => (
                  <DataRow key={r[0]} $bg={r[4]} $c={r[5]}>
                    <DataCell>{r[0]}</DataCell>
                    <DataCell $ls={r[6]}>{r[1]}</DataCell>
                    <DataCell $ls={r[7]}>{r[2]}</DataCell>
                    <DataCell>{r[3]}</DataCell>
                    <DataCell>100%</DataCell>
                  </DataRow>
                ))}
              </Grid>
              <Splitter>...</Splitter>
              <InnerTabs>
                <InTab $w={74} $on>Schedule</InTab>
                <InTab $w={56}>History</InTab>
              </InnerTabs>
              <Panel>
                <FormRow $h={28}>
                  <FormLabel>Name:</FormLabel>
                  <NameInput />
                  <KindLabel>Kind:</KindLabel>
                  <KindCombo>Once<Chev s={14} sw={1.2} /></KindCombo>
                  <Btn $w={121} $bg="#00857c" $line="#00857c" $c="#fff">Save Schedule</Btn>
                </FormRow>
                <FormRow $h={27} $mt={7}>
                  <FormLabel>Run at:</FormLabel>
                  <RunInput>2026-06-20 12:28<Calendar /></RunInput>
                </FormRow>
                <RightRow>
                  <Btn $w={87}><BtnIcon><Plus size={14} strokeWidth={1.5} /></BtnIcon>New</Btn>
                  <Btn $w={92} $bg="#f1f3f4" $c="#a4a9ad"><BtnIcon $c={red}><Trash s={13} /></BtnIcon>Delete</Btn>
                </RightRow>
                <SchedTable>
                  <SchedHead>
                    <SchedHeadCell>Name</SchedHeadCell>
                    <SchedHeadCell>Kind</SchedHeadCell>
                    <SchedHeadCell>Next Run</SchedHeadCell>
                    <SchedHeadCell>Enabled</SchedHeadCell>
                    <SchedHeadCell />
                  </SchedHead>
                  {[23, 24, 24, 24, 24, 24, 12].map((h, i) => (
                    <SchedRow key={i} $h={h}>
                      <SchedCell /><SchedCell /><SchedCell /><SchedCell /><SchedCell />
                    </SchedRow>
                  ))}
                </SchedTable>
              </Panel>
              <Actions>
                <Btn $w={134} $bg="#00857c" $line="#00857c" $c="#fff"><BtnIcon><Play size={12} fill="#fff" strokeWidth={1} /></BtnIcon>Execute Now</Btn>
                <Btn $w={87} $bg="#eff1f2" $c="#a9aeb2">Stop</Btn>
                <Btn $w={132}><BtnIcon><Clipboard size={15} strokeWidth={1.2} /></BtnIcon>Save Session</Btn>
                <Btn $w={87} $bg="#7c919e" $line="#7c919e" $c="#fff"><BtnIcon><X size={14} strokeWidth={2} /></BtnIcon>Close</Btn>
              </Actions>
              <Result><Tick />Completed: 3 succeeded, 1 failed.</Result>
            </Content>
          </Doc>
        </Main>

        <StatusBar>
          <svg viewBox="0 0 22 20" width="22" height="20" fill="#5a6670" stroke="#d4dadd" strokeWidth="1.200"><path d="M1 1h20v14h-8l-2 3-2-3H1z" /></svg>
          <ReadyText>Ready</ReadyText>
          <Grow />
          <Archive size={18} strokeWidth={1.3} />
          <RepoText>Select Repository</RepoText>
          <ChevronUp size={15} strokeWidth={2} />
          <BellWrap><Bell size={17} strokeWidth={1.2} /><NotifBadge>1</NotifBadge></BellWrap>
          <Grip />
        </StatusBar>
      </Frame>
    </>
  );
}
